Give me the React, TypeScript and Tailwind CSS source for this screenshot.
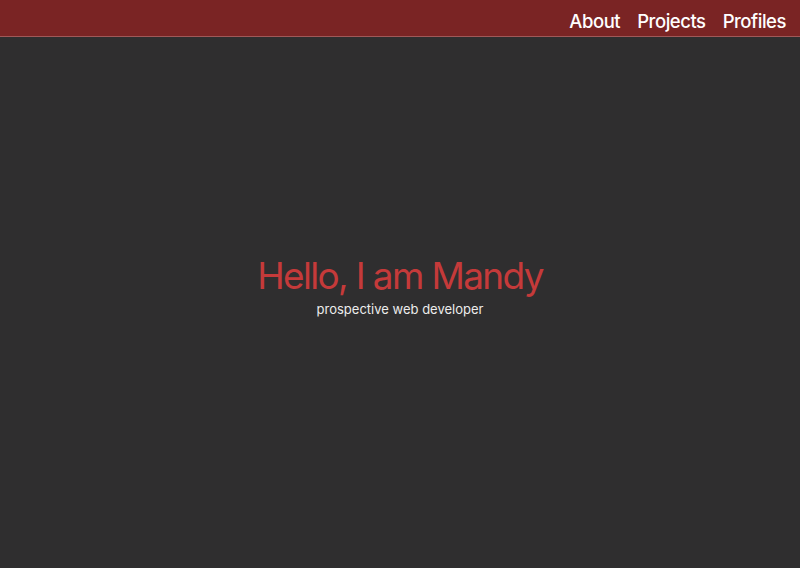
export default function App() {
  return (
    <div className="h-[568px] w-full bg-[#2f2e2f] flex flex-col" style={{ fontFamily: 'Inter, "Noto Sans", sans-serif' }}>
      <header className="h-[37px] bg-[#7a2424] border-b border-[#a05858] flex items-end justify-end pr-[14px] pb-[3px] gap-[17px] shrink-0">
        <a className="text-white text-[18.5px] leading-[24px] font-medium tracking-tight">About</a>
        <a className="text-white text-[18.5px] leading-[24px] font-medium tracking-tight">Projects</a>
        <a className="text-white text-[18.5px] leading-[24px] font-medium tracking-tight">Profiles</a>
      </header>
      <main className="flex-1 flex flex-col items-center justify-center pb-[33px]">
        <h1 className="text-[#c53a3a] text-[37px] leading-[44px] tracking-[-0.045em]">Hello, I am Mandy</h1>
        <p className="text-[#ececec] text-[13px] leading-[18px] mt-[2px]">prospective web developer</p>
      </main>
    </div>
  );
}
